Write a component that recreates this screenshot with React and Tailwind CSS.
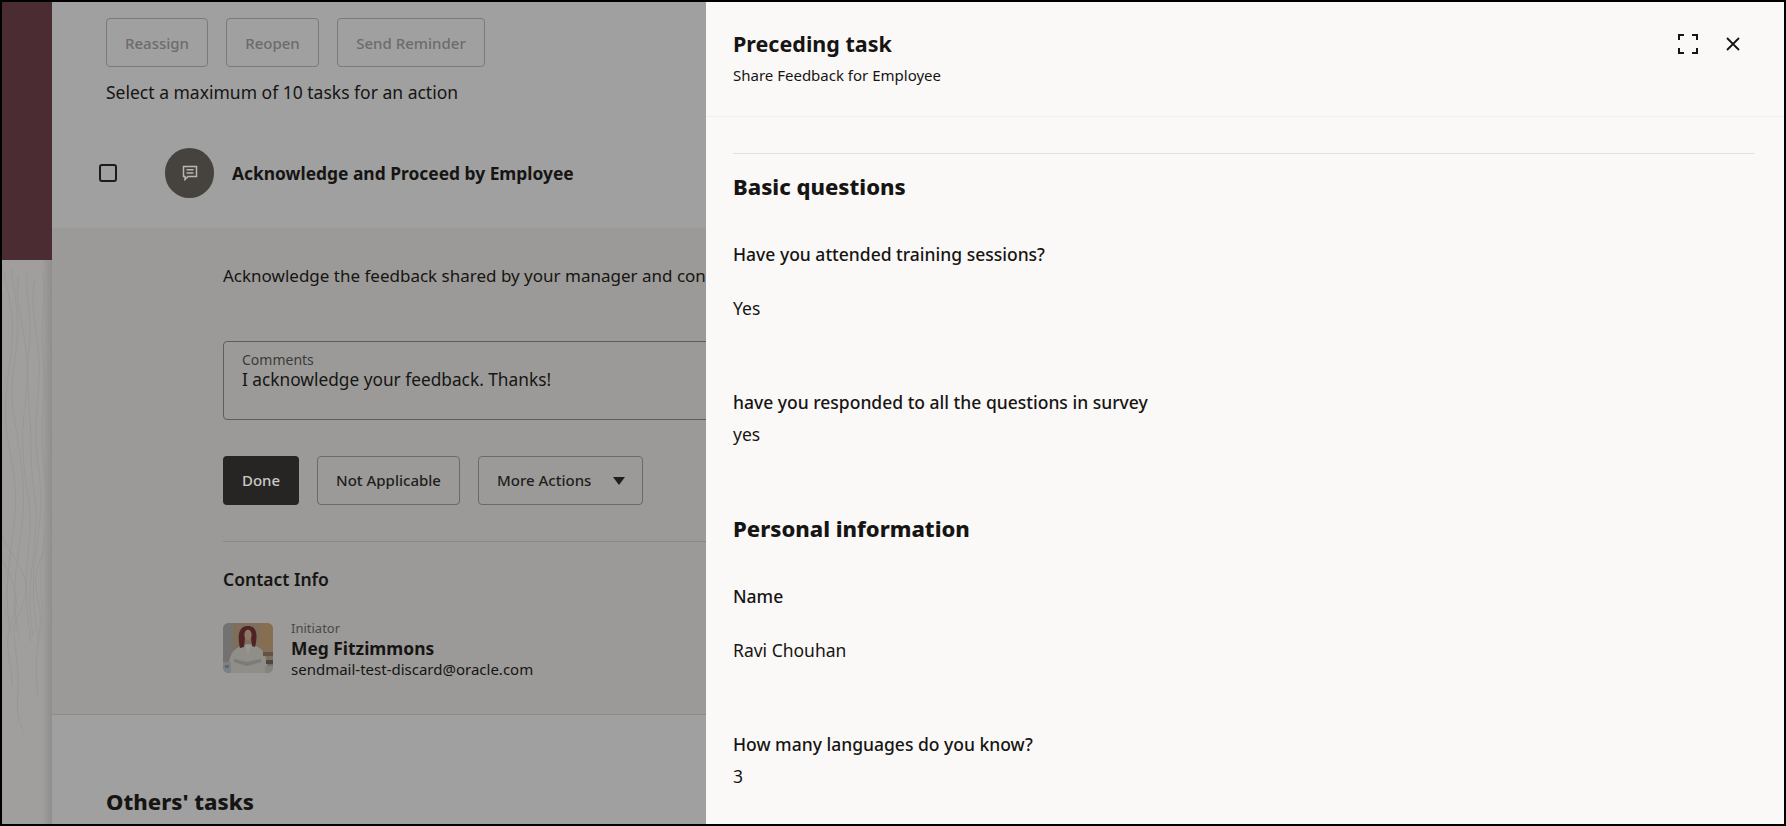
const Question = ({ label, className }) => (
  <p className={`text-[17.5px] leading-6 font-medium text-[#161513] ${className}`}>{label}</p>
);

const Answer = ({ value, className }) => (
  <p className={`text-[17.5px] leading-6 text-[#161513] ${className}`}>{value}</p>
);

const WoodGrain = () => (
  <svg viewBox="0 0 50 564" className="h-full w-full" fill="none" stroke="#979695" strokeWidth="0.8">
    <path d="M2 12c6 30 12 50 6 90s-6 60 0 90 8 50 2 90 -6 60 -2 90" />
    <path d="M9 8c4 30 10 50 4 90s-2 50 4 90 6 60 0 100 -6 60 0 90" />
    <path d="M17 16c-6 24 6 50 8 86s-6 50-4 90 10 50 6 90-4 60 2 100" />
    <path d="M25 10c-2 30 6 46 2 80s2 60 2 100 8 50 4 90 -8 60 -2 96" />
    <path d="M33 18c-6 24 2 50 4 80s-6 60 -2 96 6 50 0 90 -4 60 2 100" />
    <path d="M41 14c4 26 -4 50 0 84s-4 60 0 100 6 50 0 90 2 60 -2 90" />
    <path d="M47 30c-6 30 2 50-2 80s4 60 0 90 4 50 0 90 4 60 0 80" />
    <path d="M0 276c6 14 16 24 22 40s-2 30-8 44 4 40 2 70 2 30 6 44" />
    <path d="M0 300c6 10 12 22 14 36s-6 26-8 40 4 30 4 50" />
    <path d="M50 280c-8 12-14 20-16 36s6 30 4 50-6 40-2 70" />
  </svg>
);

const Avatar = () => (
  <svg viewBox="0 0 50 50" className="h-[50px] w-[50px] rounded-md">
    <rect width="50" height="50" fill="#7f6e5b" />
    <rect width="10" height="50" fill="#737270" />
    <rect x="37" width="13" height="26" fill="#866f50" />
    <path d="M5 50c0-13 3-23 11-26l8-3h4l7 3c7 3 9 13 10 26z" fill="#8f8e89" />
    <path d="M17 25c-3-13-1-22 8-22s10 9 7 21l-3-1-1-8h-6l-1 9z" fill="#4f2324" />
    <ellipse cx="25" cy="12" rx="3.6" ry="5.6" fill="#8d7665" />
    <path d="M11 36l13 3 14-3v3l-14 4-13-4z" fill="#7c7b77" />
    <path d="M22 22h6l-3 9z" fill="#9a9892" />
    <path d="M0 39h8v11H0z" fill="#7c8183" />
    <path d="M2 42h4v3H2z" fill="#556877" />
    <path d="M40 29h10v4H40z" fill="#625442" />
    <path d="M43 37h7v4h-7z" fill="#47484a" />
    <path d="M42 43h8v7h-8z" fill="#84837e" />
  </svg>
);

const App = () => {
  return (
    <div className="flex h-[826px] w-[1786px] overflow-hidden border-2 border-black bg-[#a0a0a0] font-['Noto_Sans',sans-serif]">
      {/* Brand strip */}
      <div className="flex w-[50px] flex-none flex-col bg-[#9c9b9a]">
        <div className="h-[258px] flex-none bg-[#4a2c32]" />
        <div className="min-h-0 flex-1 bg-gradient-to-r from-[#a09f9e] from-80% to-[#8f8e8d]">
          <WoodGrain />
        </div>
      </div>

      {/* Dimmed task page */}
      <div className="w-[654px] flex-none overflow-hidden">
        <div className="h-[226px] pl-[54px] pt-4">
          <div className="flex">
            <button className="h-[49px] w-[102px] rounded border border-[#7a7a7a] pt-px text-[15px] font-medium text-[#6c6c6b]">
              Reassign
            </button>
            <button className="ml-[18px] h-[49px] w-[93px] rounded border border-[#7a7a7a] pt-px text-[15px] font-medium text-[#6c6c6b]">
              Reopen
            </button>
            <button className="ml-[18px] h-[49px] w-[148px] rounded border border-[#7a7a7a] pt-px text-[15px] font-medium text-[#6c6c6b]">
              Send Reminder
            </button>
          </div>
          <p className="mt-[13px] text-[17.5px] leading-6 text-[#161513]">Select a maximum of 10 tasks for an action</p>
          <div className="mt-[44px] flex h-[50px] items-center">
            <span className="-ml-[7px] h-[18px] w-[18px] rounded-[3px] border-2 border-[#1d1c1a]" />
            <span className="ml-[48px] flex h-[50px] w-[49px] items-center justify-center rounded-full bg-[#46433e]">
              <svg viewBox="0 0 16 16" className="h-4 w-4" fill="none" stroke="#b9b7b3" strokeWidth="1.5">
                <path d="M1.5 1.5h13v10H6l-3 3v-3H1.5z" />
                <path d="M4.5 4.8h7M4.5 8h7" />
              </svg>
            </span>
            <h3 className="ml-[18px] text-[17.4px] font-bold text-[#161513]">Acknowledge and Proceed by Employee</h3>
          </div>
        </div>

        <div className="h-[487px] border-b border-[#8f8b8c] bg-[#9b9a98] pl-[171px] pt-9">
          <p className="whitespace-nowrap text-[17px] leading-6 text-[#161513]">
            Acknowledge the feedback shared by your manager and continue
          </p>
          <div className="mt-[53px] h-[79px] w-[600px] rounded border border-[#5f5e5c] pl-[18px] pt-[9px]">
            <p className="text-[14px] leading-[18px] text-[#3c3b39]">Comments</p>
            <p className="text-[17.3px] leading-[21px] text-[#161513]">I acknowledge your feedback. Thanks!</p>
          </div>
          <div className="mt-9 flex gap-[18px]">
            <button className="h-[49px] w-[76px] rounded bg-[#262523] text-[15px] font-medium text-[#c9c8c6]">Done</button>
            <button className="h-[49px] w-[143px] rounded border border-[#6b6a68] text-[15px] font-medium text-[#1f1e1c]">
              Not Applicable
            </button>
            <button className="flex h-[49px] w-[165px] items-center rounded border border-[#6b6a68] pl-[18px] text-[15px] font-medium text-[#1f1e1c]">
              More Actions
              <svg viewBox="0 0 12 8" className="ml-[22px] h-2 w-3" fill="#1f1e1c">
                <path d="M0 0h12L6 8z" />
              </svg>
            </button>
          </div>
          <div className="mt-9 border-t border-[#8a8987]" />
          <h4 className="mt-[25px] text-[17.5px] font-semibold leading-6 text-[#161513]">Contact Info</h4>
          <div className="mt-8 flex">
            <Avatar />
            <div className="ml-[18px]">
              <p className="-mt-[4px] text-[13px] leading-[18px] text-[#4a4947]">Initiator</p>
              <p className="text-[17.4px] font-bold leading-[22px] text-[#161513]">Meg Fitzimmons</p>
              <p className="text-[15px] leading-5 text-[#161513]">sendmail-test-discard@oracle.com</p>
            </div>
          </div>
        </div>

        <h2 className="ml-[54px] mt-[70px] text-[22px] font-extrabold leading-8 text-[#161513]">Others' tasks</h2>
      </div>

      {/* Preceding task drawer */}
      <div className="min-w-0 flex-1 bg-[#fbf9f8]">
        <div className="flex h-[115px] justify-between border-b border-[#f0eeed] pl-[27px] pr-[30px] pt-[27px]">
          <div>
            <h1 className="text-[21.5px] font-bold leading-[30px] text-[#161513]">Preceding task</h1>
            <p className="mt-[6px] text-[15px] leading-5 text-[#161513]">Share Feedback for Employee</p>
          </div>
          <div className="flex items-start gap-[28px] pt-[5px]">
            <svg viewBox="0 0 20 20" className="h-5 w-5" fill="none" stroke="#161513" strokeWidth="2">
              <path d="M6 1H1v5M14 1h5v5M6 19H1v-5M14 19h5v-5" />
            </svg>
            <svg viewBox="0 0 14 14" className="mt-[3px] mr-[14px] h-[14px] w-[14px]" fill="none" stroke="#161513" strokeWidth="1.8">
              <path d="M1 1l12 12M13 1L1 13" />
            </svg>
          </div>
        </div>
        <div className="pl-[27px] pr-[30px] pt-[36px]">
          <div className="border-t border-[#e2e0df]" />
          <h2 className="mt-4 text-[22px] font-extrabold leading-8 text-[#161513]">Basic questions</h2>
          <Question label="Have you attended training sessions?" className="mt-10" />
          <Answer value="Yes" className="mt-[30px]" />
          <Question label="have you responded to all the questions in survey" className="mt-[70px]" />
          <Answer value="yes" className="mt-2" />
          <h2 className="mt-[66px] text-[22px] font-extrabold leading-8 text-[#161513]">Personal information</h2>
          <Question label="Name" className="mt-10" />
          <Answer value="Ravi Chouhan" className="mt-[30px]" />
          <Question label="How many languages do you know?" className="mt-[70px]" />
          <Answer value="3" className="mt-2" />
        </div>
      </div>
    </div>
  );
};

export default App;
